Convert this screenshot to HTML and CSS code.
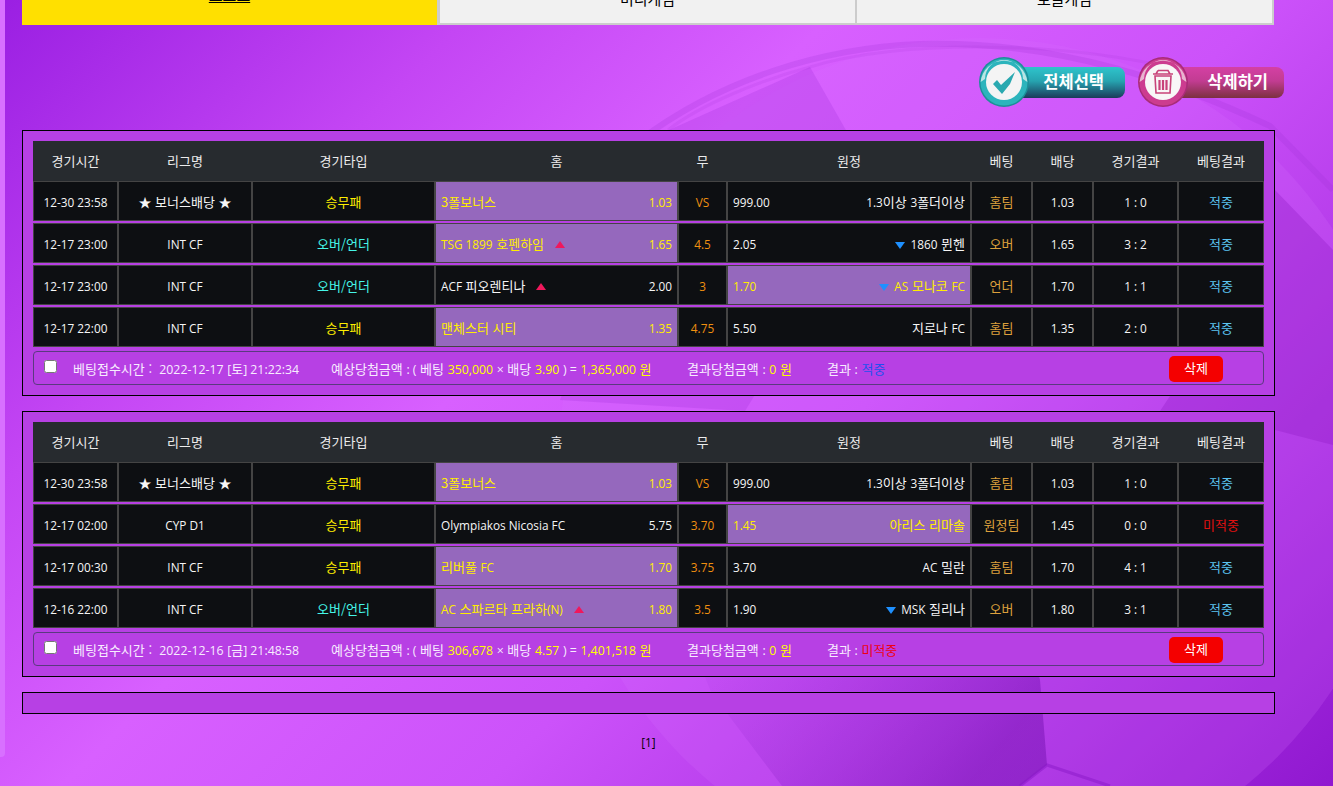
FILE: index.html
```html
<!DOCTYPE html>
<html lang="ko">
<head>
<meta charset="utf-8">
<title>베팅내역</title>
<link rel="stylesheet" href="styles.css">
</head>
<body>
<svg class="ball" viewBox="0 0 1333 786" aria-hidden="true">
  <defs>
    <linearGradient id="pan" x1="0" y1="0" x2="1" y2="0.35">
      <stop offset="0" stop-color="#a030e0" stop-opacity=".05"/>
      <stop offset="1" stop-color="#6a0aa8" stop-opacity=".42"/>
    </linearGradient>
  </defs>
  <circle cx="980" cy="459" r="421" fill="#d870ff" fill-opacity=".2"/>
  <path d="M640 140 C720 80 820 48 920 44 C1060 40 1180 84 1270 126 L1333 190" fill="none" stroke="#a030d8" stroke-opacity=".22" stroke-width="6"/>
  <path d="M668 130 C700 105 760 80 810 67 C900 40 1060 40 1180 70" fill="none" stroke="#a030d8" stroke-opacity=".14" stroke-width="3"/>
  <polygon points="810,67 669,130 560,400 745,411 880,190" fill="#a030d8" fill-opacity=".24"/>
  <polygon points="1275,190 1333,250 1333,445 1275,430 1160,411 1170,396" fill="#8a18c0" fill-opacity=".3"/>
  <polygon points="690,640 1030,640 1040,680 1047,765 1020,786 782,786 711,692" fill="url(#pan)"/>
  <path d="M1020 786 L1047 765 L1110 786" fill="none" stroke="#8a18c8" stroke-opacity=".5" stroke-width="3"/>
</svg>
<div class="edge"></div>
<main class="page">
  <nav class="tabs">
    <a class="tab tab-on">스포츠</a>
    <a class="tab">미니게임</a>
    <a class="tab">보글게임</a>
  </nav>

  <div class="actions">
    <button class="imgbtn teal" type="button">
      <svg class="disc" viewBox="0 0 50 50" aria-hidden="true">
        <circle cx="25" cy="25" r="25" fill="#1d8f98"/>
        <circle cx="25" cy="25" r="23.5" fill="#2cb4bc"/>
        <path d="M1.6 25 A23.5 23.5 0 0 1 48.4 25 L44 22 A19 19 0 0 0 6 22 Z" fill="#b9e4e4"/>
        <circle cx="25" cy="25" r="18" fill="#f4f4f4"/>
        <polygon points="14,27 18,23 22,28 36,15 31,27 23,37" fill="#2aa9b0"/>
      </svg>
      <span class="pill">전체선택</span>
    </button>
    <button class="imgbtn pink" type="button">
      <svg class="disc" viewBox="0 0 50 50" aria-hidden="true">
        <circle cx="25" cy="25" r="25" fill="#a82c78"/>
        <circle cx="25" cy="25" r="23.5" fill="#cc3c90"/>
        <path d="M1.6 25 A23.5 23.5 0 0 1 48.4 25 L44 22 A19 19 0 0 0 6 22 Z" fill="#e8b4d0"/>
        <circle cx="25" cy="25" r="18" fill="#f8f6f7"/>
        <g fill="none" stroke="#c8437a" stroke-width="1.6">
          <path d="M15 17 H35 M20 13.5 H30 L32 17 M20 13.5 L18 17"/>
          <path d="M17 19 H33 L32 36 H18 Z"/>
          <path d="M21.5 23 V33 M25 23 V33 M28.5 23 V33" stroke-width="2.2"/>
        </g>
      </svg>
      <span class="pill">삭제하기</span>
    </button>
  </div>

  <section class="card">
    <div class="row head">
      <div>경기시간</div><div>리그명</div><div>경기타입</div><div>홈</div><div>무</div><div>원정</div><div>베팅</div><div>배당</div><div>경기결과</div><div>베팅결과</div>
    </div>
    <div class="row">
      <div class="n">12-30 23:58</div><div>★ 보너스배당 ★</div><div class="yel">승무패</div>
      <div class="team on"><span>3폴보너스</span><span class="n">1.03</span></div>
      <div class="draw n">VS</div>
      <div class="team"><span class="n">999.00</span><span><span class="n">1.3</span>이상 <span class="n">3</span>폴더이상</span></div>
      <div class="gold">홈팀</div><div class="n">1.03</div><div class="n">1 : 0</div><div class="hit">적중</div>
    </div>
    <div class="row">
      <div class="n">12-17 23:00</div><div class="n">INT CF</div><div class="cyan">오버/언더</div>
      <div class="team on"><span><span class="n">TSG 1899</span> 호펜하임<i class="up"></i></span><span class="n">1.65</span></div>
      <div class="draw n">4.5</div>
      <div class="team"><span class="n">2.05</span><span><i class="down"></i><span class="n">1860</span> 뮌헨</span></div>
      <div class="gold">오버</div><div class="n">1.65</div><div class="n">3 : 2</div><div class="hit">적중</div>
    </div>
    <div class="row">
      <div class="n">12-17 23:00</div><div class="n">INT CF</div><div class="cyan">오버/언더</div>
      <div class="team"><span><span class="n">ACF</span> 피오렌티나<i class="up"></i></span><span class="n">2.00</span></div>
      <div class="draw n">3</div>
      <div class="team on"><span class="n">1.70</span><span><i class="down"></i><span class="n">AS</span> 모나코 <span class="n">FC</span></span></div>
      <div class="gold">언더</div><div class="n">1.70</div><div class="n">1 : 1</div><div class="hit">적중</div>
    </div>
    <div class="row">
      <div class="n">12-17 22:00</div><div class="n">INT CF</div><div class="yel">승무패</div>
      <div class="team on"><span>맨체스터 시티</span><span class="n">1.35</span></div>
      <div class="draw n">4.75</div>
      <div class="team"><span class="n">5.50</span><span>지로나 <span class="n">FC</span></span></div>
      <div class="gold">홈팀</div><div class="n">1.35</div><div class="n">2 : 0</div><div class="hit">적중</div>
    </div>
    <div class="foot">
      <input type="checkbox" class="chk">
      <span>베팅접수시간 : &nbsp;<span class="n">2022-12-17</span> <span class="n">[</span>토<span class="n">] 21:22:34</span></span>
      <span>예상당첨금액 <span class="n">: (</span> 베팅 <span class="n ylw">350,000</span> <span class="n">×</span> 배당 <span class="n ylw">3.90</span> <span class="n">) =</span> <span class="ylw"><span class="n">1,365,000</span> 원</span></span>
      <span>결과당첨금액 <span class="n">:</span> <span class="ylw"><span class="n">0</span> 원</span></span>
      <span>결과 <span class="n">:</span> <span class="blue">적중</span></span>
      <button class="del" type="button">삭제</button>
    </div>
  </section>

  <section class="card">
    <div class="row head">
      <div>경기시간</div><div>리그명</div><div>경기타입</div><div>홈</div><div>무</div><div>원정</div><div>베팅</div><div>배당</div><div>경기결과</div><div>베팅결과</div>
    </div>
    <div class="row">
      <div class="n">12-30 23:58</div><div>★ 보너스배당 ★</div><div class="yel">승무패</div>
      <div class="team on"><span>3폴보너스</span><span class="n">1.03</span></div>
      <div class="draw n">VS</div>
      <div class="team"><span class="n">999.00</span><span><span class="n">1.3</span>이상 <span class="n">3</span>폴더이상</span></div>
      <div class="gold">홈팀</div><div class="n">1.03</div><div class="n">1 : 0</div><div class="hit">적중</div>
    </div>
    <div class="row">
      <div class="n">12-17 02:00</div><div class="n">CYP D1</div><div class="yel">승무패</div>
      <div class="team"><span class="n">Olympiakos Nicosia FC</span><span class="n">5.75</span></div>
      <div class="draw n">3.70</div>
      <div class="team on"><span class="n">1.45</span><span>아리스 리마솔</span></div>
      <div class="gold">원정팀</div><div class="n">1.45</div><div class="n">0 : 0</div><div class="miss">미적중</div>
    </div>
    <div class="row">
      <div class="n">12-17 00:30</div><div class="n">INT CF</div><div class="yel">승무패</div>
      <div class="team on"><span>리버풀 <span class="n">FC</span></span><span class="n">1.70</span></div>
      <div class="draw n">3.75</div>
      <div class="team"><span class="n">3.70</span><span><span class="n">AC</span> 밀란</span></div>
      <div class="gold">홈팀</div><div class="n">1.70</div><div class="n">4 : 1</div><div class="hit">적중</div>
    </div>
    <div class="row">
      <div class="n">12-16 22:00</div><div class="n">INT CF</div><div class="cyan">오버/언더</div>
      <div class="team on"><span><span class="n">AC</span> 스파르타 프라하<span class="n">(N)</span><i class="up"></i></span><span class="n">1.80</span></div>
      <div class="draw n">3.5</div>
      <div class="team"><span class="n">1.90</span><span><i class="down"></i><span class="n">MSK</span> 질리나</span></div>
      <div class="gold">오버</div><div class="n">1.80</div><div class="n">3 : 1</div><div class="hit">적중</div>
    </div>
    <div class="foot">
      <input type="checkbox" class="chk">
      <span>베팅접수시간 : &nbsp;<span class="n">2022-12-16</span> <span class="n">[</span>금<span class="n">] 21:48:58</span></span>
      <span>예상당첨금액 <span class="n">: (</span> 베팅 <span class="n ylw">306,678</span> <span class="n">×</span> 배당 <span class="n ylw">4.57</span> <span class="n">) =</span> <span class="ylw"><span class="n">1,401,518</span> 원</span></span>
      <span>결과당첨금액 <span class="n">:</span> <span class="ylw"><span class="n">0</span> 원</span></span>
      <span>결과 <span class="n">:</span> <span class="red">미적중</span></span>
      <button class="del" type="button">삭제</button>
    </div>
  </section>

  <section class="card empty"></section>

  <div class="pager n">[1]</div>
</main>
</body>
</html>
```
FILE: styles.css
```css
html, body { margin: 0; padding: 0; height: 100%; overflow: hidden; }
body {
  position: relative;
  height: 786px;
  font: 13px/16px "Noto Sans CJK KR", sans-serif;
  color: #f6f6f6;
  background: linear-gradient(135deg, #9a1fe2 0%, #c446f4 23%, #d860ff 40%, #cc52fa 60%, #9018d0 100%);
}
.ball { position: absolute; left: 0; top: 0; width: 1333px; height: 786px; }
.edge {
  position: absolute; left: 0; top: 0; width: 5px; height: 757px;
  background: #d870ff; border-bottom-right-radius: 4px;
}
.n { font-family: "Open Sans", "Noto Sans CJK KR", sans-serif; font-size: 11.8px; }

.page { position: relative; width: 1253px; margin-left: 22px; }

.tabs { display: grid; grid-template-columns: 415px 419px 418px; height: 25px; color: #000; }
.tab {
  display: flex; justify-content: center; align-items: flex-end;
  height: 25px; box-sizing: border-box; padding-bottom: 14px;
  font-size: 15px; line-height: 20px;
  background: #f1f1f1; border: solid #ccc; border-width: 0 1px 2px 1px;
}
.tab:nth-child(2) { border-left-width: 3px; }
.tab:last-child { border-right-width: 2px; }
.tab-on { background: #ffe000; border: 0; padding-bottom: 20px; text-decoration: underline; }

.actions { display: flex; justify-content: flex-end; gap: 13px; margin: 32px -9px 23px 0; }
.imgbtn {
  position: relative; display: flex; align-items: center; justify-content: flex-end;
  width: 146px; height: 50px; padding: 0; border: 0; background: none; font: inherit;
}
.disc { position: absolute; left: 0; top: 0; width: 50px; height: 50px; }
.pill {
  display: flex; align-items: center; justify-content: flex-end;
  width: 105px; height: 31px; box-sizing: border-box; padding: 0 21px 3px 0;
  border-radius: 0 8px 8px 0;
  color: #fff; font-size: 16.5px; font-weight: 700;
}
.pink .pill { padding-right: 16px; background: linear-gradient(#d440a4, #c23c92 45%, #7c3040); }
.teal .pill { background: linear-gradient(#2fc4cc, #26a4b0 45%, #1c3a5a); }

.card {
  box-sizing: border-box; height: 266px; margin-bottom: 15px; padding: 10px;
  background: #b740e4; border: 1px solid #000;
}
.card.empty { height: 22px; padding: 0; margin-bottom: 0; }

.row {
  display: grid;
  grid-template-columns: 85px 134px 183px 243px 49px 244px 61px 61px 85px 86px;
  height: 40px; margin-bottom: 2px;
}
.row > div {
  display: flex; align-items: center; justify-content: center; min-width: 0;
  box-sizing: border-box; padding-top: 2px;
  background: #0d0f12; border: 1px solid #444;
  white-space: nowrap;
}
.row.head { margin-bottom: 0; }
.row.head > div { background: #272b2f; border: 0; padding-top: 0; color: #ececec; }
.row > .team { justify-content: space-between; padding: 2px 5px 0 5px; }
.row > .on { background: #9568bd; color: #ffee00; }

.yel { color: #ffee00; }
.cyan { color: #45f5e8; }
.row > .draw { color: #f09010; }
.gold { color: #dca03c; }
.hit { color: #5cc4f0; }
.miss { color: #e01010; }

.up, .down {
  display: inline-block; width: 0; height: 0; vertical-align: 1px;
  border-left: 5px solid transparent; border-right: 5px solid transparent;
}
.up { border-bottom: 7px solid #f0185c; margin-left: 11px; }
.down { border-top: 7px solid #1e90ff; margin-right: 5px; vertical-align: 0; }

.foot {
  display: grid;
  grid-template-columns: 29px 258px 356px 140px 342px 54px;
  align-items: center;
  box-sizing: border-box; height: 34px; margin-top: 4px; padding-left: 10px;
  border: 1px solid #5a3a80; border-radius: 4px;
  color: #f8ecff; white-space: nowrap;
}
.foot > span { padding-top: 2px; }
.foot .n { font-size: 12.3px; }
.chk { width: 13px; height: 13px; margin: 0 0 3px; }
.ylw { color: #ffff00; }
.blue { color: #2050f0; }
.red { color: #f00010; }
.del {
  width: 54px; height: 26px; margin-top: 2px; padding: 0 0 2px;
  background: #f40000; color: #fff; border: 0; border-radius: 5px;
  font: inherit;
}

.pager { margin-top: 20px; text-align: center; color: #000; }
```
